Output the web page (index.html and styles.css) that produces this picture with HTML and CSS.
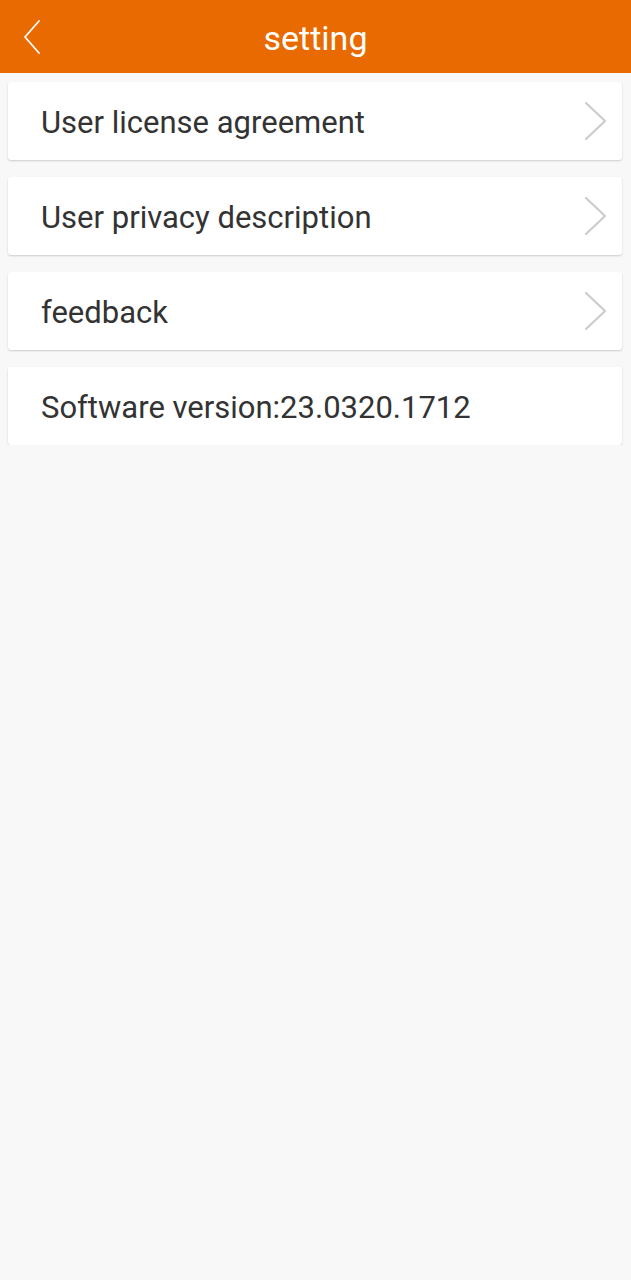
FILE: index.html
```html
<!DOCTYPE html>
<html lang="en">
<head>
    <meta charset="UTF-8">
    <meta name="viewport" content="width=device-width, initial-scale=1.0">
    <title>setting</title>
    <link rel="stylesheet" href="styles.css">
</head>
<body>
    <header class="top-bar">
        <button class="back-btn" aria-label="Back">
            <svg width="20" height="36" viewBox="0 0 20 36">
                <path d="M17 2 L3 18 L17 34" fill="none" stroke="#ffffff" stroke-width="1.8" stroke-linecap="round" stroke-linejoin="round"/>
            </svg>
        </button>
        <h1 class="title">setting</h1>
    </header>

    <ul class="menu">
        <li class="menu-item">
            <span class="menu-text">User license agreement</span>
            <svg class="chevron" width="26" height="42" viewBox="0 0 26 42">
                <path d="M3 3 L22 21 L3 39" fill="none" stroke="#cccccc" stroke-width="2.2" stroke-linecap="round" stroke-linejoin="round"/>
            </svg>
        </li>
        <li class="menu-item">
            <span class="menu-text">User privacy description</span>
            <svg class="chevron" width="26" height="42" viewBox="0 0 26 42">
                <path d="M3 3 L22 21 L3 39" fill="none" stroke="#cccccc" stroke-width="2.2" stroke-linecap="round" stroke-linejoin="round"/>
            </svg>
        </li>
        <li class="menu-item">
            <span class="menu-text">feedback</span>
            <svg class="chevron" width="26" height="42" viewBox="0 0 26 42">
                <path d="M3 3 L22 21 L3 39" fill="none" stroke="#cccccc" stroke-width="2.2" stroke-linecap="round" stroke-linejoin="round"/>
            </svg>
        </li>
        <li class="menu-item">
            <span class="menu-text">Software version:23.0320.1712</span>
        </li>
    </ul>
</body>
</html>
```

FILE: styles.css
```css
body {
    font-family: Roboto, 'Noto Sans', sans-serif;
    background-color: #f8f8f8;
    margin: 0;
    padding: 0;
    color: #333333;
}

.top-bar {
    height: 73px;
    background-color: #e86a00;
    display: flex;
    align-items: center;
    justify-content: center;
    position: relative;
}

.back-btn {
    position: absolute;
    left: 22px;
    top: 19px;
    padding: 0;
    border: none;
    background: none;
    display: flex;
}

.title {
    margin: 0;
    color: #ffffff;
    font-size: 34px;
    font-weight: normal;
    padding-top: 3px;
}

.menu {
    list-style-type: none;
    margin: 0;
    padding: 9px 9px 0 8px;
    display: flex;
    flex-direction: column;
    gap: 17px;
}

.menu-item {
    height: 78px;
    background-color: #ffffff;
    border-radius: 3px;
    box-shadow: 0 1px 2px rgba(0, 0, 0, 0.18);
    display: flex;
    align-items: center;
    justify-content: space-between;
    padding: 0 13px 0 33px;
}

.menu-text {
    font-size: 31px;
    color: #333333;
    padding-top: 2px;
}

.chevron {
    display: block;
}
```
